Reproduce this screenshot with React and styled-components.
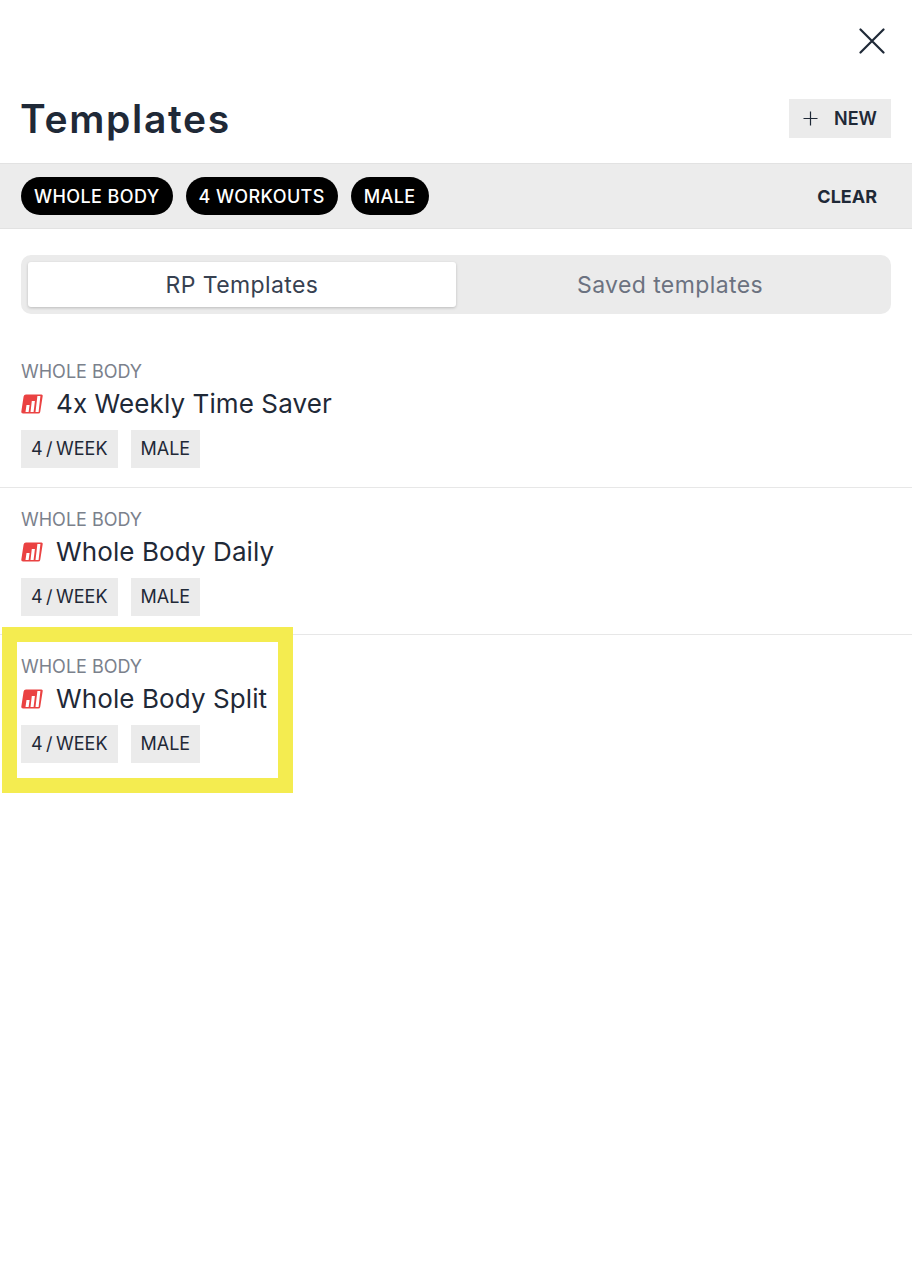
import React from "react";
import styled, { createGlobalStyle } from "styled-components";

const Global = createGlobalStyle`
  html, body {
    margin: 0;
    padding: 0;
    background: #fff;
  }
  * {
    box-sizing: border-box;
  }
  body {
    font-family: "Inter", "Liberation Sans", sans-serif;
    color: #1f2937;
  }
`;

const templates = [
  { id: 1, title: "4x Weekly Time Saver" },
  { id: 2, title: "Whole Body Daily" },
  { id: 3, title: "Whole Body Split", highlighted: true },
];

const filters = ["WHOLE BODY", "4 WORKOUTS", "MALE"];

const CloseIcon = () => (
  <svg width="26" height="26" viewBox="0 0 26 26" fill="none">
    <path d="M1.5 1.5 L24.5 24.5 M24.5 1.5 L1.5 24.5" stroke="#1f2937" strokeWidth="2.2" strokeLinecap="round" />
  </svg>
);

const PlusIcon = () => (
  <svg width="15" height="15" viewBox="0 0 15 15" fill="none">
    <path d="M7.5 0.5 V14.5 M0.5 7.5 H14.5" stroke="#1f2937" strokeWidth="1.2" />
  </svg>
);

const LevelIcon = () => (
  <svg width="22" height="20" viewBox="0 0 22 20">
    <path d="M5 0.5 H20.5 Q22 0.5 21.7 2 L19.2 18 Q19 19.5 17.2 19.5 H2 Q0.1 19.5 0.3 17.8 L2.6 2.5 Q3 0.5 5 0.5 Z" fill="#ea4242" />
    <path d="M5.5 11 H8.6 L7.6 18 H4.5 Z M10.8 7 H13.9 L12.6 18 H9.5 Z M16.4 2 H19.4 L17.6 18 H14.5 Z" fill="#fff" />
  </svg>
);

const App = () => {
  return (
    <Page>
      <Global />
      <CloseRow>
        <CloseButton>
          <CloseIcon />
        </CloseButton>
      </CloseRow>
      <Header>
        <Title>Templates</Title>
        <NewButton>
          <PlusIcon />
          NEW
        </NewButton>
      </Header>
      <FilterBar>
        <Pills>
          {filters.map((f) => (
            <Pill key={f}>{f}</Pill>
          ))}
        </Pills>
        <ClearButton>CLEAR</ClearButton>
      </FilterBar>
      <Tabs>
        <Tab $active>RP Templates</Tab>
        <Tab>Saved templates</Tab>
      </Tabs>
      <List>
        {templates.map((t) => (
          <Item key={t.id}>
            {t.highlighted && <Highlight />}
            <Category>WHOLE BODY</Category>
            <NameRow>
              <LevelIcon />
              <Name>{t.title}</Name>
            </NameRow>
            <Tags>
              <Tag>4 / WEEK</Tag>
              <Tag>MALE</Tag>
            </Tags>
          </Item>
        ))}
      </List>
    </Page>
  );
};

const Page = styled.div`
  width: 912px;
  min-height: 1278px;
  background: #fff;
`;

const CloseRow = styled.div`
  display: flex;
  justify-content: flex-end;
  padding: 28px 27px 0 0;
  height: 99px;
`;

const CloseButton = styled.div`
  width: 26px;
  height: 26px;
`;

const Header = styled.div`
  display: flex;
  justify-content: space-between;
  align-items: center;
  padding: 0 21px;
  height: 64px;
  padding-bottom: 25px;
`;

const Title = styled.h1`
  margin: 0 0 0 -1px;
  font-size: 39px;
  font-weight: 600;
  line-height: 40px;
  letter-spacing: 1.7px;
  color: #1f2937;
`;

const NewButton = styled.div`
  display: flex;
  align-items: center;
  justify-content: center;
  gap: 16px;
  width: 102px;
  height: 39px;
  background: #ebebeb;
  font-size: 18px;
  font-weight: 600;
  color: #1f2937;
`;

const FilterBar = styled.div`
  display: flex;
  justify-content: space-between;
  align-items: center;
  height: 66px;
  padding: 0 35px 0 21px;
  background: #ececec;
  border-top: 1px solid #e2e2e2;
  border-bottom: 1px solid #e2e2e2;
`;

const Pills = styled.div`
  display: flex;
  gap: 13px;
`;

const Pill = styled.div`
  display: flex;
  align-items: center;
  height: 38px;
  padding: 0 13px;
  border-radius: 19px;
  background: #000;
  color: #fff;
  font-size: 18px;
  font-weight: 500;
  letter-spacing: 0.4px;
`;

const ClearButton = styled.div`
  font-size: 18px;
  font-weight: 700;
  color: #1f2937;
`;

const Tabs = styled.div`
  display: grid;
  grid-template-columns: 1fr 1fr;
  height: 59px;
  margin: 26px 21px 0;
  padding: 7px;
  background: #ebebeb;
  border-radius: 10px;
`;

const Tab = styled.div`
  display: flex;
  align-items: center;
  justify-content: center;
  font-size: 23px;
  letter-spacing: 0.4px;
  border-radius: 3px;
  color: ${(p) => (p.$active ? "#374151" : "#6b7280")};
  background: ${(p) => (p.$active ? "#fff" : "transparent")};
  box-shadow: ${(p) => (p.$active ? "0 1px 3px rgba(0,0,0,0.2)" : "none")};
`;

const List = styled.div`
  margin-top: 30px;
`;

const Item = styled.div`
  position: relative;
  padding: 20px 21px 0;
  height: 147px;
  border-bottom: 1px solid #e7e7e7;

  &:first-child {
    height: 144px;
    padding-top: 16px;
  }

  &:last-child {
    border-bottom: none;
  }
`;

const Highlight = styled.div`
  position: absolute;
  left: 2px;
  top: -8px;
  width: 291px;
  height: 166px;
  border: 15px solid #f4ec50;
  pointer-events: none;
`;

const Category = styled.div`
  font-size: 18px;
  line-height: 24px;
  color: #7b818c;
`;

const NameRow = styled.div`
  display: flex;
  align-items: center;
  gap: 14px;
  height: 39px;
`;

const Name = styled.div`
  margin-left: -1px;
  font-size: 26px;
  letter-spacing: 0.1px;
  color: #1f2937;
`;

const Tags = styled.div`
  display: flex;
  gap: 13px;
  margin-top: 6.6px;
`;

const Tag = styled.div`
  display: flex;
  align-items: center;
  height: 38.4px;
  padding: 0 10px 1px;
  background: #ebebeb;
  font-size: 18px;
  word-spacing: -1.6px;
  color: #1f2937;
`;

export default App;
